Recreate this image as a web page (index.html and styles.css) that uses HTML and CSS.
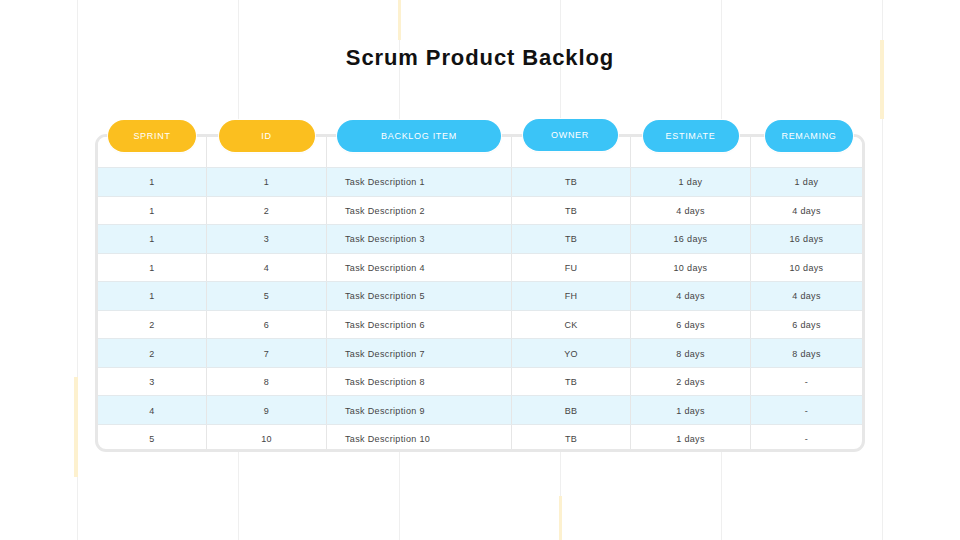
FILE: index.html
```html
<!DOCTYPE html>
<html lang="en">
<head>
<meta charset="utf-8">
<title>Scrum Product Backlog</title>
<link rel="stylesheet" href="styles.css">
</head>
<body>
<main class="slide">
  <h1 class="title">Scrum Product Backlog</h1>
  <section class="backlog">
    <div class="row head">
      <div class="cell"><span class="pill yellow">SPRINT</span></div>
      <div class="cell"><span class="pill yellow w-id">ID</span></div>
      <div class="cell"><span class="pill blue w-item">BACKLOG ITEM</span></div>
      <div class="cell"><span class="pill blue w-owner up">OWNER</span></div>
      <div class="cell"><span class="pill blue w-est">ESTIMATE</span></div>
      <div class="cell"><span class="pill blue w-rem">REMAMING</span></div>
    </div>
    <div class="row alt"><div class="cell">1</div><div class="cell">1</div><div class="cell desc">Task Description 1</div><div class="cell">TB</div><div class="cell">1 day</div><div class="cell">1 day</div></div>
    <div class="row"><div class="cell">1</div><div class="cell">2</div><div class="cell desc">Task Description 2</div><div class="cell">TB</div><div class="cell">4 days</div><div class="cell">4 days</div></div>
    <div class="row alt"><div class="cell">1</div><div class="cell">3</div><div class="cell desc">Task Description 3</div><div class="cell">TB</div><div class="cell">16 days</div><div class="cell">16 days</div></div>
    <div class="row"><div class="cell">1</div><div class="cell">4</div><div class="cell desc">Task Description 4</div><div class="cell">FU</div><div class="cell">10 days</div><div class="cell">10 days</div></div>
    <div class="row alt"><div class="cell">1</div><div class="cell">5</div><div class="cell desc">Task Description 5</div><div class="cell">FH</div><div class="cell">4 days</div><div class="cell">4 days</div></div>
    <div class="row"><div class="cell">2</div><div class="cell">6</div><div class="cell desc">Task Description 6</div><div class="cell">CK</div><div class="cell">6 days</div><div class="cell">6 days</div></div>
    <div class="row alt"><div class="cell">2</div><div class="cell">7</div><div class="cell desc">Task Description 7</div><div class="cell">YO</div><div class="cell">8 days</div><div class="cell">8 days</div></div>
    <div class="row"><div class="cell">3</div><div class="cell">8</div><div class="cell desc">Task Description 8</div><div class="cell">TB</div><div class="cell">2 days</div><div class="cell">-</div></div>
    <div class="row alt"><div class="cell">4</div><div class="cell">9</div><div class="cell desc">Task Description 9</div><div class="cell">BB</div><div class="cell">1 days</div><div class="cell">-</div></div>
    <div class="row"><div class="cell">5</div><div class="cell">10</div><div class="cell desc">Task Description 10</div><div class="cell">TB</div><div class="cell">1 days</div><div class="cell">-</div></div>
  </section>
</main>
</body>
</html>
```
FILE: styles.css
```css
html, body {
  margin: 0;
  padding: 0;
}

body {
  width: 960px;
  height: 540px;
  overflow: hidden;
  background-color: #ffffff;
  font-family: "Liberation Sans", Arial, sans-serif;
}

.slide {
  width: 960px;
  height: 540px;
  box-sizing: border-box;
  padding-top: 47px;
  background-image:
    linear-gradient(#fdf1cf, #fdf1cf),
    linear-gradient(#fdf1cf, #fdf1cf),
    linear-gradient(#fdf1cf, #fdf1cf),
    linear-gradient(#fdf1cf, #fdf1cf),
    repeating-linear-gradient(90deg, transparent 0 77px, #efefef 77px 78px, transparent 78px 161px);
  background-size: 3px 40px, 4px 79px, 4px 100px, 3px 44px, 100% 100%;
  background-position: 398px 0, 880px 40px, 74px 377px, 559px 496px, 0 0;
  background-repeat: no-repeat;
}

.title {
  margin: 0;
  font-size: 22px;
  line-height: 22px;
  font-weight: 700;
  letter-spacing: 0.9px;
  color: #111111;
  text-align: center;
}

.backlog {
  width: 770px;
  margin: 65px 0 0 95px;
  box-sizing: border-box;
  border: 3px solid #e7e7e7;
  border-radius: 11px;
  background: #ffffff;
}

.row {
  display: grid;
  grid-template-columns: 109px 120px 185px 119px 120px 111px;
  height: 28.56px;
  box-sizing: border-box;
  border-top: 1px solid #e3e9ec;
}

.row:last-child {
  height: 25.5px;
  border-radius: 0 0 8px 8px;
}

.row.alt {
  background: #e4f6fd;
}

.row.head {
  height: 30px;
  border-top: none;
  background: #ffffff;
  border-radius: 8px 8px 0 0;
}

.cell {
  display: flex;
  align-items: center;
  justify-content: center;
  padding-top: 1px;
  border-right: 1px solid #e6e6e6;
  font-size: 9px;
  letter-spacing: 0.35px;
  color: #444444;
}

.row:last-child .cell {
  padding-top: 3px;
}

.cell:last-child {
  border-right: none;
}

.cell.desc {
  justify-content: flex-start;
  padding-left: 18px;
}

.head .cell {
  align-items: flex-start;
  padding-top: 0;
}

.pill {
  display: flex;
  align-items: center;
  justify-content: center;
  width: 88px;
  height: 32px;
  margin-top: -17px;
  border-radius: 16px;
  color: #ffffff;
  font-size: 9px;
  letter-spacing: 0.7px;
  box-shadow: 0 0 0 1px rgba(255, 255, 255, 0.9), 0 1px 2px rgba(0, 0, 0, 0.05);
}

.pill.yellow {
  background: #fbbf1f;
}

.pill.blue {
  background: #3bc4f7;
}

.pill.w-id { width: 96px; }
.pill.w-item { width: 164px; }
.pill.w-owner { width: 95px; margin-right: 2px; }
.pill.w-est { width: 96px; }
.pill.w-rem { width: 88px; margin-left: 5px; }

.pill.up {
  margin-top: -18px;
}
```
